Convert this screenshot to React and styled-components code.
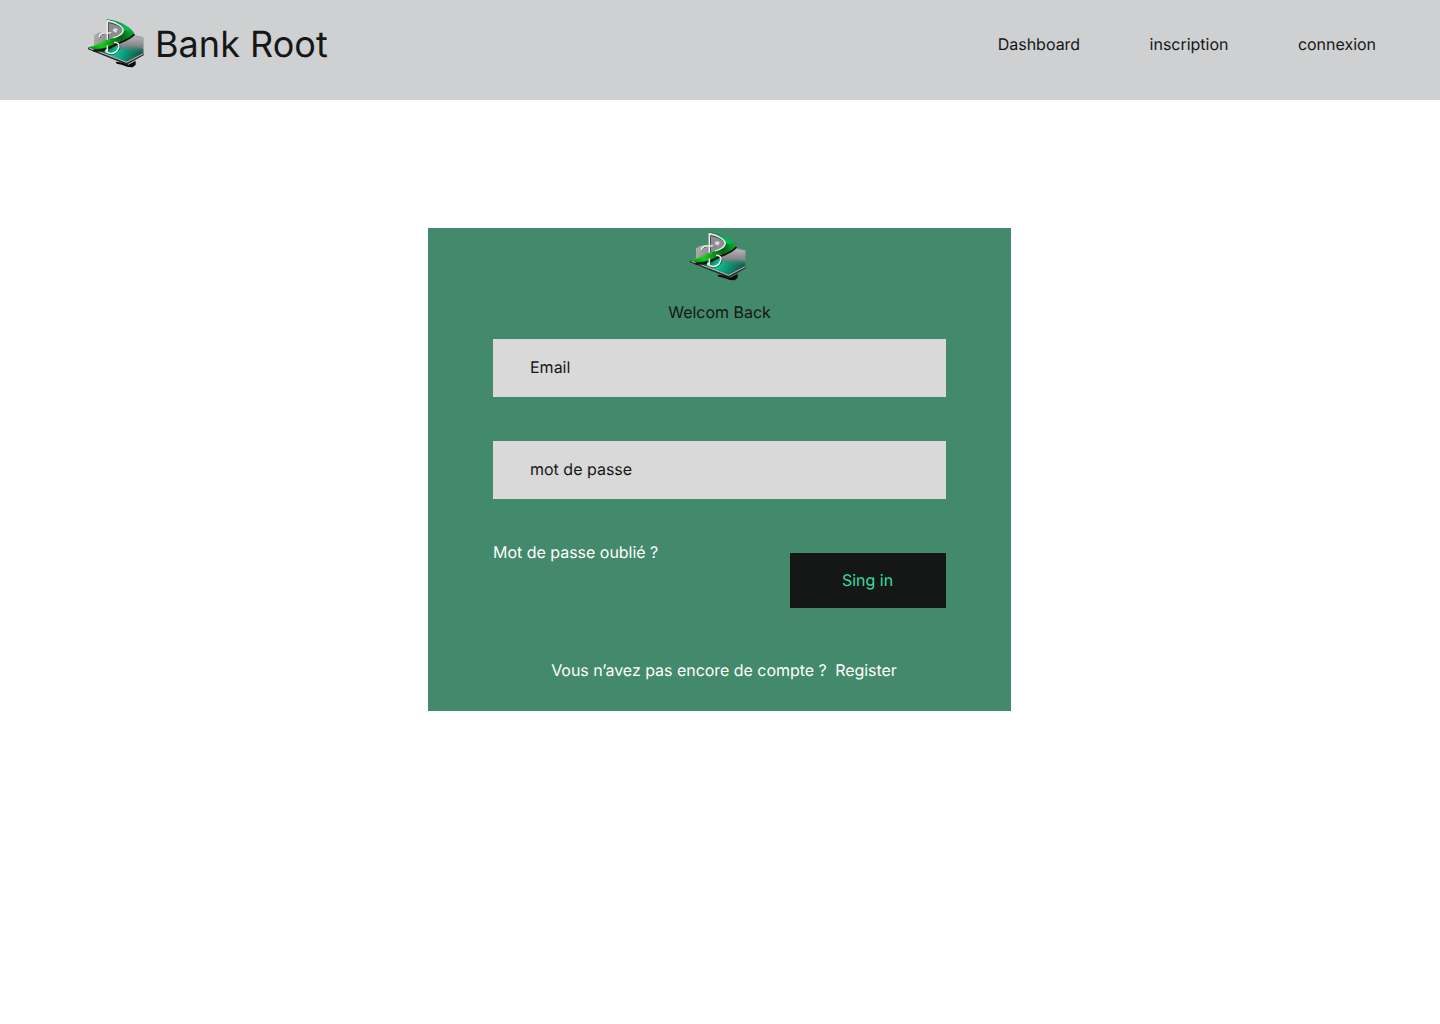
import React, { useId } from "react";
import styled, { createGlobalStyle } from "styled-components";

const GlobalStyle = createGlobalStyle`
  *, *::before, *::after { box-sizing: border-box; }
  body {
    margin: 0;
    background: #ffffff;
    color: #151716;
    font-family: Inter, "Liberation Sans", sans-serif;
    font-size: 16px;
    line-height: 24px;
    letter-spacing: -0.02px;
    text-rendering: geometricPrecision;
  }
`;

const Page = styled.div`
  min-height: 1024px;
  display: flex;
  flex-direction: column;
  align-items: center;
`;

const Header = styled.header`
  width: 100%;
  height: 100px;
  padding: 16px 64px 0 84px;
  display: flex;
  justify-content: space-between;
  align-items: flex-start;
  background: #cfd0d2;
`;

const Brand = styled.div`
  display: flex;
  align-items: center;
  gap: 7px;
  height: 56px;
`;

const BrandName = styled.span`
  font-size: 36px;
  line-height: 44px;
  letter-spacing: 0.03px;
  white-space: nowrap;
`;

const Nav = styled.nav`
  display: flex;
  align-items: center;
  gap: 69.5px;
  height: 56px;
`;

const Link = styled.a`
  color: inherit;
  text-decoration: none;
  white-space: nowrap;
`;

const Card = styled.form`
  width: 583px;
  height: 483px;
  margin: 128px 1px 0 0;
  padding: 1px 65px 0;
  display: flex;
  flex-direction: column;
  align-items: center;
  background: #43896b;
`;

const CardLogo = styled.div`
  height: 56px;
  margin-right: 3px;
`;

const Title = styled.h1`
  margin: 15px 0 15px;
  font-size: 16px;
  font-weight: 400;
  line-height: 24px;
`;

const Field = styled.input`
  width: 100%;
  height: 58px;
  margin: 0 0 44px;
  padding: 0 37px 2px;
  border: 0;
  border-radius: 0;
  outline: 0;
  background: #d9d9d9;
  color: #151716;
  font: inherit;
  text-rendering: inherit;
  &::placeholder { color: #151716; opacity: 1; }
`;

const Actions = styled.div`
  width: 100%;
  height: 70px;
  margin-top: -3px;
  display: flex;
  justify-content: space-between;
  align-items: flex-start;
  color: #ffffff;
`;

const Submit = styled.button`
  width: 156px;
  height: 55px;
  margin: 13px 0 0;
  padding: 0 1px 2px 0;
  border: 0;
  background: #151716;
  color: #31dfa9;
  font: inherit;
  text-rendering: inherit;
`;

const Register = styled.p`
  margin: 48px 0 0 9px;
  display: flex;
  gap: 8.5px;
  letter-spacing: -0.035px;
  color: #ffffff;
  white-space: nowrap;
`;

const LogoSvg = styled.svg`
  display: block;
  width: 64px;
  height: 56px;
  flex: none;
`;

function Logo() {
  const id = useId().replace(/:/g, "");
  const ref = (name) => `url(#${id}${name})`;
  return (
    <LogoSvg viewBox="0 0 192 168" aria-hidden="true">
      <defs>
        <linearGradient id={`${id}wall`} x1="0" y1="0" x2="1" y2="0.3">
          <stop offset="0" stopColor="#b2b2b4" />
          <stop offset="0.35" stopColor="#8b8c8e" />
          <stop offset="0.75" stopColor="#b5b5b8" />
          <stop offset="1" stopColor="#858588" />
        </linearGradient>
        <linearGradient id={`${id}deck`} x1="0" y1="0" x2="1" y2="0.2">
          <stop offset="0" stopColor="#404643" />
          <stop offset="0.3" stopColor="#044933" />
          <stop offset="0.58" stopColor="#08c795" />
          <stop offset="1" stopColor="#145e50" />
        </linearGradient>
        <linearGradient id={`${id}fade`} x1="0" y1="0" x2="0" y2="1">
          <stop offset="0" stopColor="#b0b0b4" />
          <stop offset="0.5" stopColor="#85888b" />
          <stop offset="1" stopColor="#087760" stopOpacity="0" />
        </linearGradient>
        <linearGradient id={`${id}ribbon`} gradientUnits="userSpaceOnUse" x1="12" y1="95" x2="148" y2="45">
          <stop offset="0" stopColor="#07880f" />
          <stop offset="0.28" stopColor="#16cc1b" />
          <stop offset="0.5" stopColor="#079617" />
          <stop offset="0.72" stopColor="#006213" />
          <stop offset="1" stopColor="#05b531" />
        </linearGradient>
        <linearGradient id={`${id}arc`} x1="0" y1="0" x2="1" y2="1">
          <stop offset="0" stopColor="#007e41" />
          <stop offset="0.6" stopColor="#07bd58" />
          <stop offset="1" stopColor="#078f20" />
        </linearGradient>
      </defs>
      <path d="M95 137 125 141 133 146 155 134V146L146 154 132 153 113 146 98 143Z" fill="#070808" />
      <path d="M30 58 43 50 98 44 178 64V111L125 139 30 101Z" fill={ref("wall")} />
      <path d="M12 94 57 88 112 78 178 98V111L127 137Z" fill={ref("deck")} />
      <path d="M107 64 178 64V108L150 114 98 94Z" fill={ref("fade")} />
      <path d="M12 95 128 137 179 110V118L128 146 12 100Z" fill="#252d2b" />
      <path d="M16 96 128 139 178 113" fill="none" stroke="#bfc3c2" strokeWidth="3" />
      <path d="M151 54C136 70 119 75 104 81C84 91 62 108 28 103" fill="none" stroke="#101510" strokeWidth="7" />
      <path d="M68 10C98 12 133 27 150 50L132 64C127 43 101 25 68 17Z" fill={ref("arc")} />
      <path d="M70 16C98 20 120 35 117 47C113 59 98 66 78 72Z" fill="#8b8d90" />
      <path d="M12 94C39 90 49 79 68 73C94 67 114 61 121 43L150 50C137 66 119 71 101 78C80 88 54 107 12 94Z" fill={ref("ribbon")} />
      <path d="M73 20V70M76 20C101 25 121 37 117 46C112 58 99 64 88 68M48 66C49 54 59 50 83 53M72 89V107M91 81C104 80 109 88 107 97C103 110 90 117 78 114C67 113 64 107 70 103" fill="none" stroke="#303533" strokeWidth="3" />
      <path d="M70 12V71M72 14C99 19 121 35 117 46C113 57 100 63 87 67M46 64C47 52 57 48 82 51M70 88V107M90 79C102 78 107 86 104 95C101 107 89 114 78 112C66 110 62 105 68 101" fill="none" stroke="#eeeeef" strokeWidth="4.5" />
      <path d="M12 94C39 90 49 79 68 73C87 68 101 65 112 58C111 71 98 74 82 81C61 92 43 103 12 94Z" fill={ref("ribbon")} />
      <path d="M18 93C41 89 53 79 78 73" fill="none" stroke="#52d94c" strokeWidth="1.5" />
      <path d="M88 38Q95 34 101 40L97 50 86 45Z" fill="#d9dadb" />
    </LogoSvg>
  );
}

const links = ["Dashboard", "inscription", "connexion"];

export default function App() {
  return (
    <Page>
      <GlobalStyle />
      <Header>
        <Brand>
          <Logo />
          <BrandName>Bank Root</BrandName>
        </Brand>
        <Nav>
          {links.map((label) => (
            <Link key={label}>{label}</Link>
          ))}
        </Nav>
      </Header>
      <Card onSubmit={(event) => event.preventDefault()}>
        <CardLogo>
          <Logo />
        </CardLogo>
        <Title>Welcom Back</Title>
        <Field type="email" placeholder="Email" />
        <Field type="password" placeholder="mot de passe" />
        <Actions>
          <Link>Mot de passe oublié ?</Link>
          <Submit type="submit">Sing in</Submit>
        </Actions>
        <Register>
          <span>Vous n’avez pas encore de compte ?</span>
          <Link>Register</Link>
        </Register>
      </Card>
    </Page>
  );
}
